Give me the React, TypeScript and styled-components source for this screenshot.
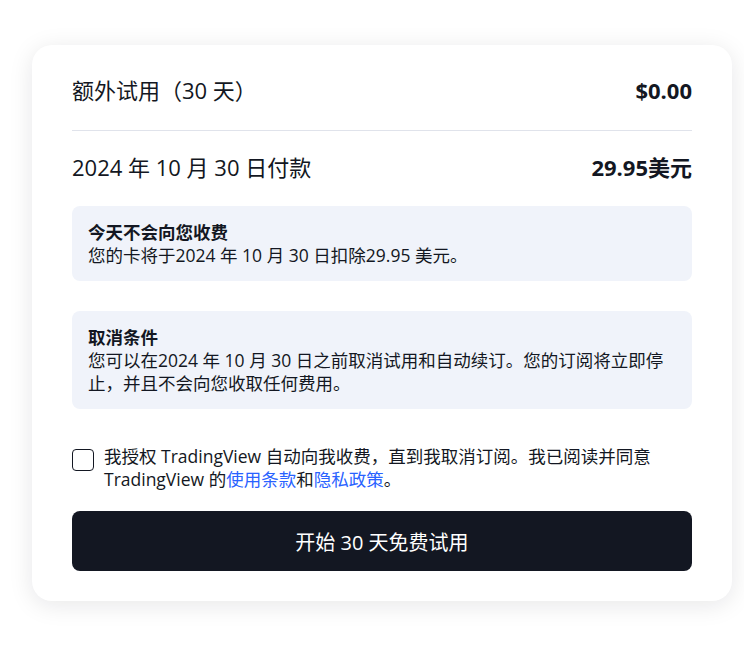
import styled, { createGlobalStyle } from "styled-components";

const GlobalStyle = createGlobalStyle`
  body {
    margin: 0;
    background: #ffffff;
    font-family: "Open Sans", "Noto Sans CJK SC", sans-serif;
    color: #131722;
  }
`;

const Page = styled.div`
  padding: 45px 12px 40px 32px;
`;

const Card = styled.div`
  width: 700px;
  box-sizing: border-box;
  background: #ffffff;
  border-radius: 20px;
  box-shadow: 0 4px 24px rgba(19, 23, 34, 0.1);
  padding: 9px 40px 30px;
`;

interface RowProps {
  readonly divided?: boolean;
}

const Row = styled.div<RowProps>`
  display: flex;
  align-items: center;
  justify-content: space-between;
  height: ${(props) => (props.divided ? "77px" : "75px")};
  padding-bottom: 4px;
  font-size: 22px;
  line-height: 28px;
  border-bottom: ${(props) => (props.divided ? "1px solid #e0e3eb" : "none")};
  box-sizing: border-box;
`;

const Amount = styled.span`
  font-weight: 700;
`;

const Notice = styled.div`
  background: #f0f3fa;
  border-radius: 8px;
  padding: 15px 16px 14px;
  font-size: 17.5px;
  line-height: 23px;
  & + & {
    margin-top: 30px;
  }
`;

const NoticeTitle = styled.div`
  font-weight: 700;
`;

const Consent = styled.label`
  display: flex;
  align-items: flex-start;
  gap: 10px;
  margin-top: 36px;
  font-size: 17.5px;
  line-height: 23px;
  cursor: pointer;
`;

const Box = styled.span`
  flex: none;
  width: 22px;
  height: 22px;
  box-sizing: border-box;
  margin-top: 4px;
  border: 1px solid #131722;
  border-radius: 4px;
  background: #ffffff;
`;

const TextLink = styled.a`
  color: #2962ff;
  text-decoration: none;
`;

const StartButton = styled.button`
  display: block;
  width: 100%;
  height: 60px;
  margin-top: 20px;
  border: none;
  border-radius: 8px;
  background: #131722;
  color: #ffffff;
  font-family: inherit;
  font-size: 20px;
  cursor: pointer;
`;

export default function App() {
  return (
    <Page>
      <GlobalStyle />
      <Card>
        <Row divided>
          <span>额外试用（30 天）</span>
          <Amount>$0.00</Amount>
        </Row>
        <Row>
          <span>2024 年 10 月 30 日付款</span>
          <Amount>29.95美元</Amount>
        </Row>
        <Notice>
          <NoticeTitle>今天不会向您收费</NoticeTitle>
          您的卡将于2024 年 10 月 30 日扣除29.95 美元。
        </Notice>
        <Notice>
          <NoticeTitle>取消条件</NoticeTitle>
          您可以在2024 年 10 月 30 日之前取消试用和自动续订。您的订阅将立即停止，并且不会向您收取任何费用。
        </Notice>
        <Consent>
          <Box />
          <span>
            我授权 TradingView 自动向我收费，直到我取消订阅。我已阅读并同意 TradingView 的
            <TextLink href="#">使用条款</TextLink>和<TextLink href="#">隐私政策</TextLink>。
          </span>
        </Consent>
        <StartButton>开始 30 天免费试用</StartButton>
      </Card>
    </Page>
  );
}
